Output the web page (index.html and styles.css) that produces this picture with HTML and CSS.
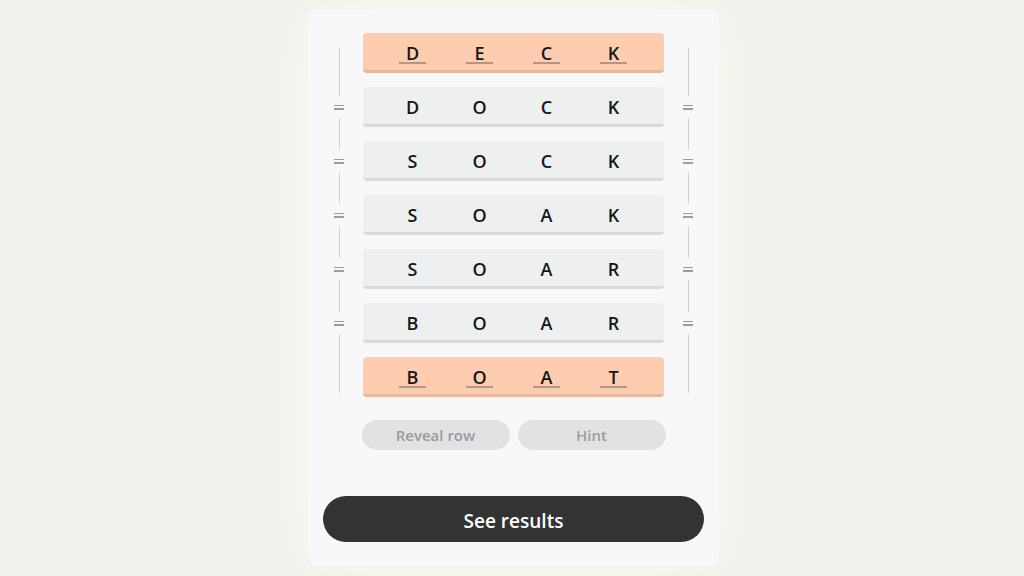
FILE: index.html
```html
<!DOCTYPE html>
<html>
<head>
<meta charset="utf-8">
<link rel="stylesheet" href="styles.css">
</head>
<body>
<div class="page">
  <div class="card">
    <div class="board">
      <div class="rail">
        <div class="seg seg-first"></div>
        <div class="eq"><span></span><span></span></div>
        <div class="seg"></div>
        <div class="eq"><span></span><span></span></div>
        <div class="seg"></div>
        <div class="eq"><span></span><span></span></div>
        <div class="seg"></div>
        <div class="eq"><span></span><span></span></div>
        <div class="seg"></div>
        <div class="eq"><span></span><span></span></div>
        <div class="seg seg-last"></div>
      </div>
      <div class="rows">
        <div class="row fixed"><span class="cell">D</span><span class="cell">E</span><span class="cell">C</span><span class="cell">K</span></div>
        <div class="row"><span class="cell">D</span><span class="cell">O</span><span class="cell">C</span><span class="cell">K</span></div>
        <div class="row"><span class="cell">S</span><span class="cell">O</span><span class="cell">C</span><span class="cell">K</span></div>
        <div class="row"><span class="cell">S</span><span class="cell">O</span><span class="cell">A</span><span class="cell">K</span></div>
        <div class="row"><span class="cell">S</span><span class="cell">O</span><span class="cell">A</span><span class="cell">R</span></div>
        <div class="row"><span class="cell">B</span><span class="cell">O</span><span class="cell">A</span><span class="cell">R</span></div>
        <div class="row fixed"><span class="cell">B</span><span class="cell">O</span><span class="cell">A</span><span class="cell">T</span></div>
      </div>
      <div class="rail">
        <div class="seg seg-first"></div>
        <div class="eq"><span></span><span></span></div>
        <div class="seg"></div>
        <div class="eq"><span></span><span></span></div>
        <div class="seg"></div>
        <div class="eq"><span></span><span></span></div>
        <div class="seg"></div>
        <div class="eq"><span></span><span></span></div>
        <div class="seg"></div>
        <div class="eq"><span></span><span></span></div>
        <div class="seg seg-last"></div>
      </div>
    </div>
    <div class="actions">
      <button class="pill">Reveal row</button>
      <button class="pill">Hint</button>
    </div>
    <button class="primary">See results</button>
  </div>
</div>
</body>
</html>
```

FILE: styles.css
```css
html, body {
  margin: 0;
  padding: 0;
}
body {
  background: #f1f0eb;
  font-family: "Open Sans", "Noto Sans", "DejaVu Sans", sans-serif;
  width: 1024px;
  height: 576px;
  overflow: hidden;
}
.page {
  display: flex;
  justify-content: center;
  padding-top: 10px;
  padding-left: 3px;
}
.card {
  width: 411px;
  height: 555px;
  box-sizing: border-box;
  background: #f8f8fa;
  border-radius: 8px;
  padding: 23px 15px 23px 15px;
  display: flex;
  flex-direction: column;
  box-shadow: 0 0 60px rgba(255, 255, 245, 0.7);
}
.board {
  display: flex;
  gap: 8px;
}
.rail {
  width: 32px;
  display: flex;
  flex-direction: column;
  align-items: center;
  padding-top: 15px;
}
.seg {
  width: 1px;
  height: 32px;
  background: #d2d2d4;
}
.seg-first { height: 48px; }
.seg-last { height: 59px; }
.eq {
  height: 22px;
  display: flex;
  flex-direction: column;
  justify-content: center;
  align-items: center;
  gap: 2px;
}
.eq span {
  width: 10px;
  height: 1.5px;
  background: #9c9c9e;
}
.rows {
  width: 301px;
  display: flex;
  flex-direction: column;
  gap: 14px;
}
.row {
  height: 37px;
  border-bottom: 3px solid #dadadb;
  background: #eeefef;
  border-radius: 4px;
  display: grid;
  grid-template-columns: repeat(4, 67px);
  padding: 0 16px;
  align-items: center;
}
.row.fixed {
  background: #fecdb0;
  border-bottom-color: #ebb79c;
}
.cell {
  justify-self: center;
  font-size: 18px;
  font-weight: 600;
  color: #161616;
  line-height: 20px;
  position: relative;
  padding-top: 3px;
}
.fixed .cell::after {
  content: "";
  position: absolute;
  left: 50%;
  bottom: -1px;
  width: 27px;
  height: 2px;
  margin-left: -13.5px;
  background: #b2968a;
}
.actions {
  display: flex;
  justify-content: center;
  gap: 8px;
  margin-top: 23px;
}
.pill {
  width: 148px;
  height: 30px;
  border: none;
  border-radius: 15px;
  background: #e2e2e4;
  color: #9b9b9b;
  font-family: "Open Sans", "Noto Sans", sans-serif;
  font-size: 15px;
  font-weight: 600;
  padding: 0;
}
.primary {
  margin-top: 46px;
  height: 46px;
  border: none;
  border-radius: 23px;
  background: #333333;
  color: #ffffff;
  font-family: "Open Sans", "Noto Sans", sans-serif;
  font-size: 19px;
  font-weight: 600;
  padding: 3px 0 0 0;
}
```
